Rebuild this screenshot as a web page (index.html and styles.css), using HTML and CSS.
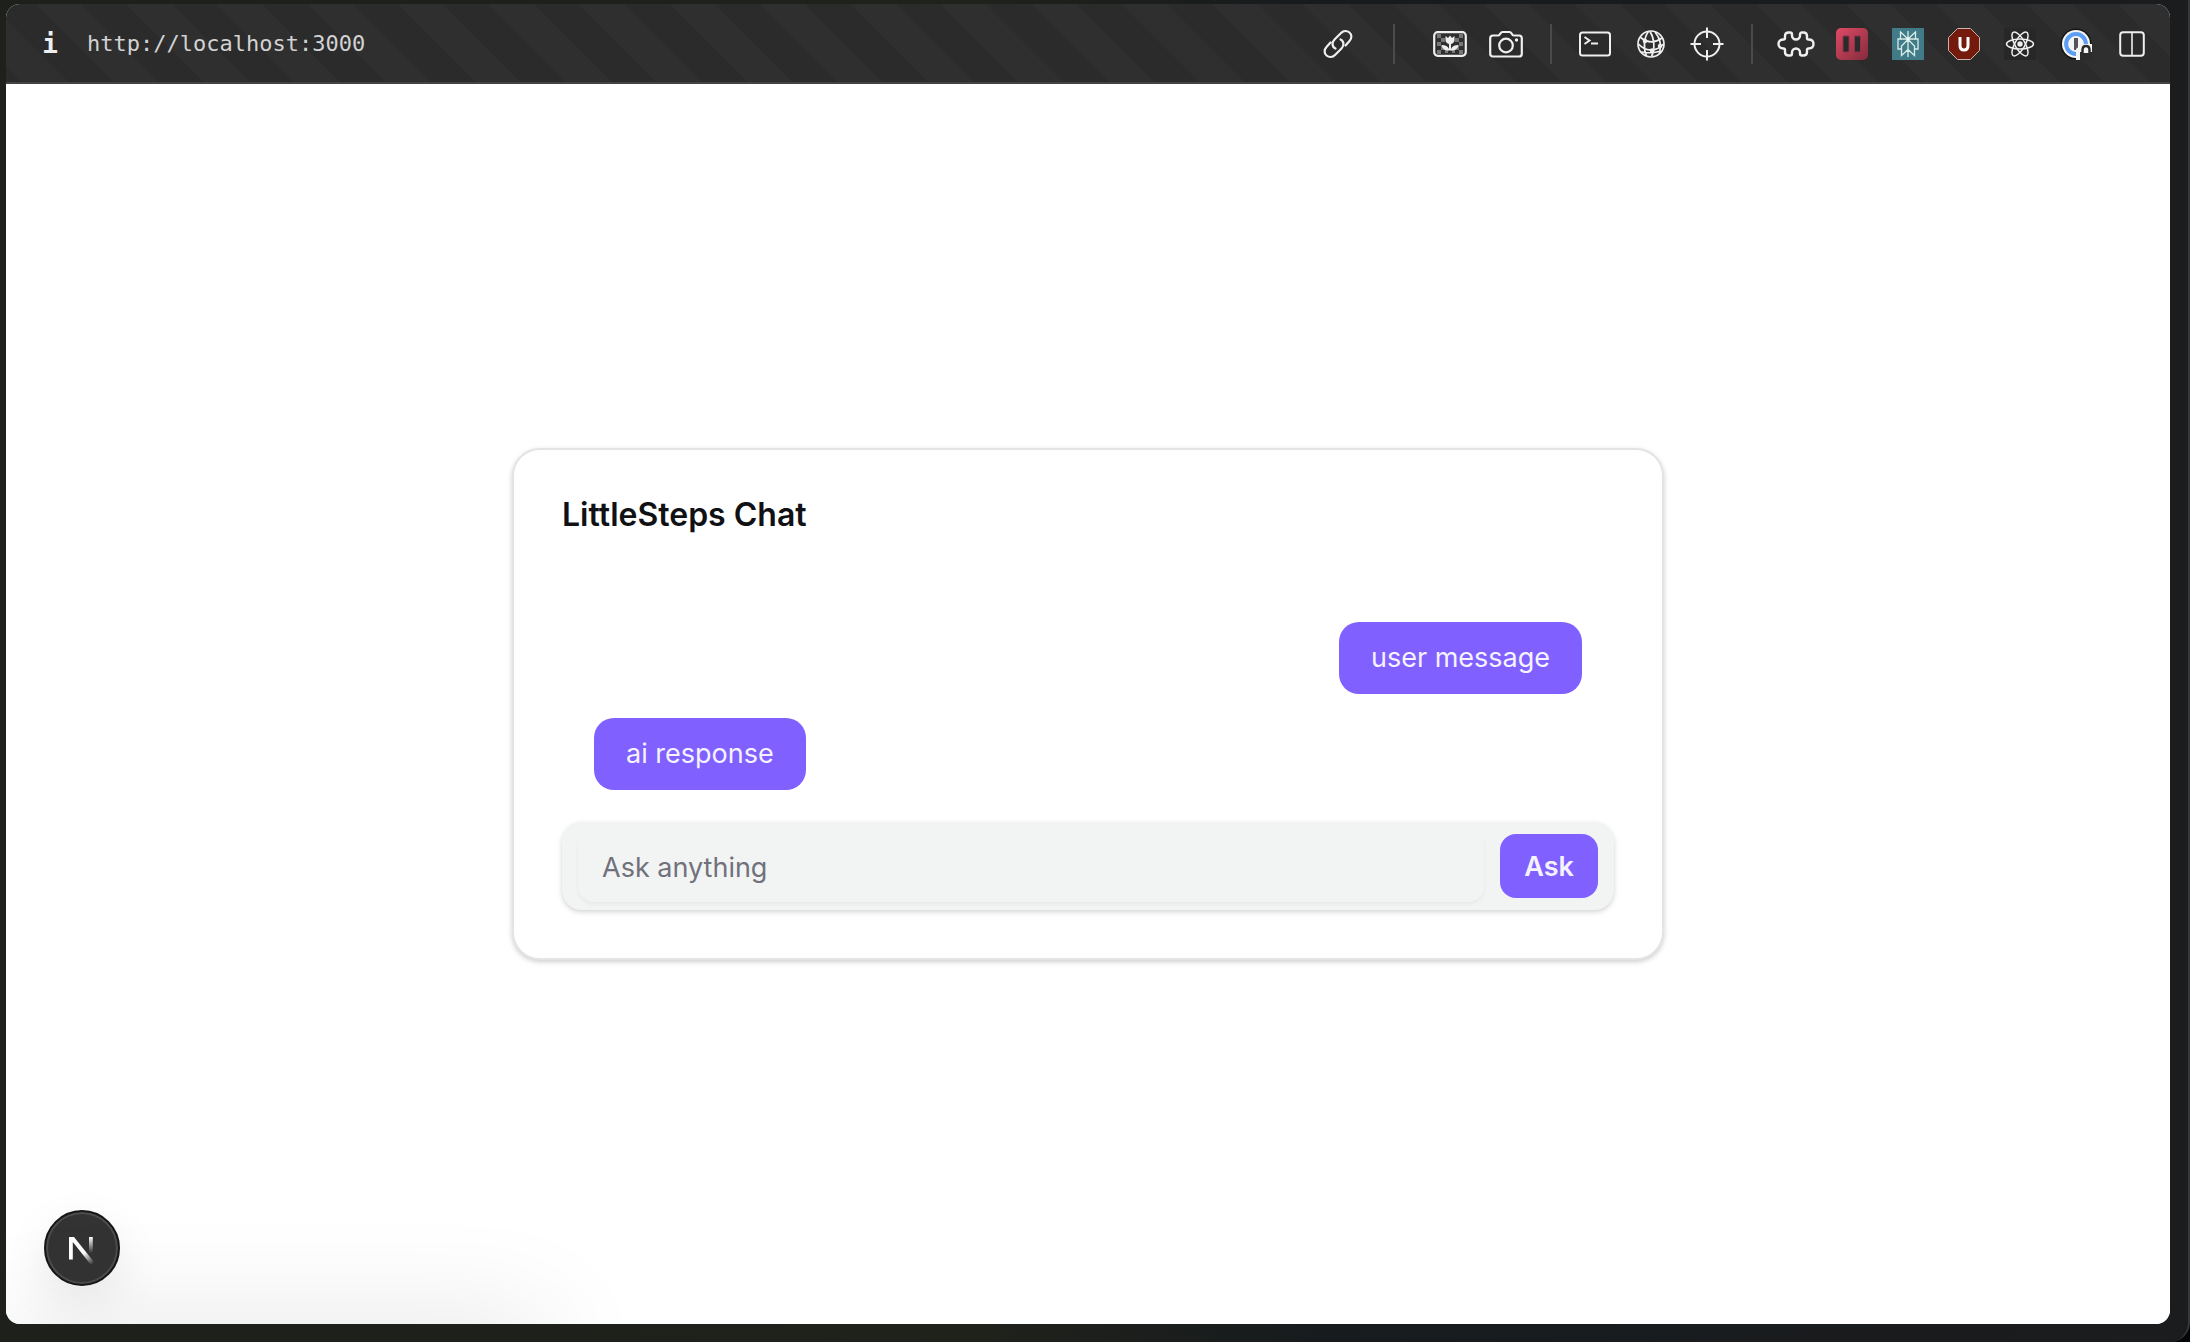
FILE: index.html
```html
<!DOCTYPE html>
<html lang="en">
<head>
<meta charset="utf-8">
<meta name="viewport" content="width=device-width, initial-scale=1">
<title>LittleSteps Chat</title>
<link rel="stylesheet" href="styles.css">
</head>
<body>
<div class="window">
  <header class="toolbar">
    <button class="info" type="button" aria-label="Site information">i</button>
    <a class="address" href="http://localhost:3000">http://localhost:3000</a>
    <div class="tools">
      <button class="tool" type="button" aria-label="Copy link">
        <svg width="30" height="30" viewBox="0 0 30 30" fill="none" stroke="currentColor" stroke-width="2.2" stroke-linecap="round"><path d="M12.500 19.500c-3.500-1.500-4-6-1-9L18 4c2.500-2.500 6-2.500 8.500-.5s2.500 6 0 8.500l-4 4.500"/><path d="M17.500 10.500c3.500 1.500 4 6 1 9L12 26c-2.500 2.500-6 2.500-8.500.5s-2.500-6 0-8.500l4-4.500"/></svg>
      </button>
      <span class="divider divider-wide"></span>
      <button class="tool" type="button" aria-label="Capture element">
        <svg width="34" height="26" viewBox="0 0 34 26"><g fill="#777"><path d="M4 3h4v4H4zM8 7h4v4H8zM4 11h4v4H4zM8 15h4v4H8zM4 19h4v4H4zM26 3h4v4h-4zM22 7h4v4h-4zM26 11h4v4h-4zM22 15h4v4h-4zM26 19h4v4h-4zM12 19h3v3h-3zM19 19h3v3h-3z"/></g><rect x="1.200" y="1.200" width="31.600" height="23.600" rx="3.500" fill="none" stroke="currentColor" stroke-width="2.200"/><path fill="currentColor" d="M12.500 5l2.500 2 2-2.500L19 7l2.500-2v4c0 2-1.500 3.500-3.500 4v5c1-2.500 3.500-4 7.500-4-.5 3.500-3 5.500-7 5.500h-3c-4 0-6.500-2-7-5.500 4 0 6.500 1.500 7.500 4v-5c-2-.5-3.500-2-3.500-4z"/></svg>
      </button>
      <button class="tool" type="button" aria-label="Take screenshot">
        <svg width="34" height="28" viewBox="0 0 34 28" fill="none" stroke="currentColor" stroke-width="2.200"><path d="M4 5.500h5.500c1.500 0 2-3.500 4-3.500h7c2 0 2.500 3.500 4 3.500H30q2.800 0 2.800 2.800v15.400q0 2.800-2.800 2.800H4q-2.800 0-2.800-2.800V8.300Q1.200 5.500 4 5.500z"/><circle cx="17" cy="15.500" r="6.800"/><circle cx="27.500" cy="10" r="1.700" fill="currentColor" stroke="none"/></svg>
      </button>
      <span class="divider"></span>
      <button class="tool" type="button" aria-label="Open console">
        <svg width="32" height="26" viewBox="0 0 32 26" fill="none" stroke="currentColor" stroke-width="2"><rect x="1" y="1.500" width="30" height="23" rx="2.500"/><path d="M5.500 6l5 3.500-5 3.500M12 12.500h7"/></svg>
      </button>
      <button class="tool" type="button" aria-label="Network">
        <svg width="30" height="30" viewBox="0 0 30 30" fill="none" stroke="currentColor" stroke-width="1.700"><circle cx="15" cy="15" r="13"/><path d="M12.500 2.500C8 8 7 19 10.500 27M14 2.500c4 6 5.500 17 1.500 25M19 3c5 6 6.500 14 4.500 21M4 8c7 6 15 6 22 1M2.500 15c7 8 18 8 25 0M5 23c6 1 14 1 20-1"/><g fill="currentColor" stroke="none"><circle cx="9" cy="12" r="2.300"/><circle cx="24" cy="17" r="2.200"/><circle cx="16" cy="21.500" r="2.300"/></g></svg>
      </button>
      <button class="tool" type="button" aria-label="Inspect element">
        <svg width="34" height="34" viewBox="0 0 34 34" fill="none" stroke="currentColor" stroke-width="2"><circle cx="17" cy="17" r="12.500"/><path d="M17 .5v10.500M17 23v10.500M.5 17H11M23 17h10.500"/></svg>
      </button>
      <span class="divider"></span>
      <button class="tool" type="button" aria-label="Extensions">
        <svg width="38" height="26" viewBox="0 0 38 26" fill="none" stroke="currentColor" stroke-width="2.400" stroke-linejoin="round"><path d="M1.500 13c0-3 2-4.500 5-4.500Q8 8.500 8 7V5q0-3.500 3.500-3.500H13q2 0 2 2v1a4 4 0 0 0 8 0v-1q0-2 2-2h1.500Q30 1.500 30 5v2q0 1.500 1.500 1.500c3 0 5 1.500 5 4.500s-2 4.500-5 4.500Q30 17.500 30 19v2q0 3.500-3.500 3.500H25q-2 0-2-2v-1a4 4 0 0 0-8 0v1q0 2-2 2h-1.500Q8 24.500 8 21v-2q0-1.500-1.500-1.500c-3 0-5-1.500-5-4.500z"/></svg>
      </button>
      <button class="tool" type="button" aria-label="Pause extension">
        <svg width="32" height="32" viewBox="0 0 32 32"><defs><linearGradient id="pause" x1="0" y1="0" x2="1" y2="1"><stop offset="0" stop-color="#e04a66"/><stop offset="1" stop-color="#842b3c"/></linearGradient></defs><rect width="32" height="32" rx="5" fill="url(#pause)"/><path fill="#2b2b2b" stroke="#94304a" d="M7 8h6v16H7zM18.500 8h6v16h-6z"/></svg>
      </button>
      <button class="tool" type="button" aria-label="Perplexity">
        <svg width="32" height="32" viewBox="0 0 32 32" fill="none" stroke="#d7ece9" stroke-width="1.300"><path fill="#427b88" stroke="none" d="M0 0h32v32H0z"/><path d="M16 3v26M16 11L8.500 4v7M16 11l7.500-7v7M9 21H6V11h20v10h-3M16 11.500L9.500 18v9.500L16 21.500M16 11.500l6.500 6.500v9.500L16 21.500"/><circle cx="16" cy="11" r="1.500" fill="#fff"/></svg>
      </button>
      <button class="tool" type="button" aria-label="uBlock Origin">
        <svg width="32" height="32" viewBox="0 0 32 32"><path d="M9.500.5h13l9 9v13l-9 9h-13l-9-9v-13z" fill="#751b0d" stroke="#c9b3ae"/><path d="M12 9v8.500q0 4.500 4 4.500t4-4.500V9" fill="none" stroke="#fff" stroke-width="3"/></svg>
      </button>
      <button class="tool" type="button" aria-label="React Developer Tools">
        <svg width="32" height="32" viewBox="0 0 32 32" fill="none" stroke="currentColor" stroke-width="1.500"><path d="M0 0h32v32H0z" fill="#272727" stroke="none"/><ellipse cx="16" cy="16" rx="13.500" ry="5"/><ellipse cx="16" cy="16" rx="13.500" ry="5" transform="rotate(60 16 16)"/><ellipse cx="16" cy="16" rx="13.500" ry="5" transform="rotate(120 16 16)"/><circle cx="16" cy="16" r="2.700" fill="currentColor" stroke="none"/></svg>
      </button>
      <button class="tool" type="button" aria-label="1Password">
        <svg width="32" height="32" viewBox="0 0 32 32"><circle cx="16" cy="16" r="15.500" fill="#151515"/><circle cx="16" cy="16" r="14" fill="#f5f5f5"/><circle cx="16" cy="16" r="9.900" fill="none" stroke="#5c9df5" stroke-width="4"/><path d="M14 10h4v12h-4z" fill="#555"/><path d="M16 21l6-5h10v16H16z" fill="#f5f5f5"/><path d="M20 24h12v8H20z" fill="#2b2b2b"/><path d="M22.500 25v-3q0-4 3.500-4t3.500 4v3" fill="#f5f5f5" stroke="#2b2b2b" stroke-width="2.500"/></svg>
      </button>
      <button class="tool" type="button" aria-label="Split view">
        <svg width="26" height="26" viewBox="0 0 26 26" fill="none" stroke="currentColor" stroke-width="2"><rect x="1.200" y="1.200" width="23.600" height="23.600" rx="3"/><path d="M13 1v24" stroke-width="1.600"/></svg>
      </button>
    </div>
  </header>

  <main class="page">
    <section class="card">
      <h1 class="card-title">LittleSteps Chat</h1>
      <div class="messages">
        <p class="bubble bubble-user">user message</p>
        <p class="bubble bubble-ai">ai response</p>
      </div>
      <form class="composer">
        <input class="composer-input" type="text" placeholder="Ask anything" aria-label="Ask anything">
        <button class="composer-send" type="button">Ask</button>
      </form>
    </section>
    <button class="dev-badge" type="button" aria-label="Next.js dev tools">
      <svg width="28" height="24" viewBox="0 0 28 24" overflow="visible" fill="none"><defs><linearGradient id="nd" gradientUnits="userSpaceOnUse" x1="16" y1="17" x2="25" y2="28"><stop stop-color="#fff"/><stop offset="1" stop-color="#fff" stop-opacity="0"/></linearGradient><linearGradient id="nv" gradientUnits="userSpaceOnUse" x1="23" y1="1" x2="23" y2="17"><stop stop-color="#fff"/><stop offset="1" stop-color="#fff" stop-opacity="0"/></linearGradient></defs><path d="M1 1h5l20 25-3 3L4.800 6v17.500H1z" fill="url(#nd)"/><path d="M21 1h3.800v16H21z" fill="url(#nv)"/></svg>
    </button>
  </main>
</div>
</body>
</html>
```
FILE: styles.css
```css
* {
  box-sizing: border-box;
}

html {
  background: #050608;
}

body {
  display: flex;
  min-height: 100vh;
  margin: 0;
  padding: 4px 18px 18px 6px;
  border-right: 2px solid #36393b;
  border-radius: 0 0 20px 0;
  background: linear-gradient(to right, #1d201b, #1f211b 45%, #171b1d 60%, #1b1c1e);
  font-family: Inter, "Liberation Sans", sans-serif;
}

button {
  margin: 0;
  padding: 0;
  border: 0;
  background: none;
  color: inherit;
  font: inherit;
}

.window {
  display: flex;
  flex: 1;
  flex-direction: column;
  overflow: hidden;
  border-radius: 14px;
  background: #fff;
}

.toolbar {
  display: flex;
  align-items: center;
  height: 80px;
  padding: 2px 10px 0 36px;
  border-bottom: 2px solid #434343;
  background: repeating-linear-gradient(45deg, #2b2b2b 0 12px, #2f2f2f 12px 44px, #2b2b2b 44px 64px);
  color: #efefef;
}

.info {
  width: 16px;
  font: bold 26px/40px "DejaVu Sans Mono", monospace;
}

.address {
  margin-left: 29px;
  color: #d2d2d2;
  font: 22px/40px "DejaVu Sans Mono", monospace;
  text-decoration: none;
}

.tools {
  display: flex;
  align-items: center;
  margin-left: auto;
}

.tool {
  display: flex;
  align-items: center;
  justify-content: center;
  width: 56px;
  height: 40px;
}

.divider {
  width: 2px;
  height: 40px;
  margin: 0 15px 0 16px;
  background: #4b4b4b;
}

.divider-wide {
  margin: 0 27px;
}

.page {
  position: relative;
  display: flex;
  flex: 1;
  align-items: center;
  justify-content: center;
  overflow: hidden;
  background: #fff;
}

/* soft shade rising from the lower left edge */
.page::after {
  content: "";
  position: absolute;
  top: 100%;
  left: 0;
  width: 540px;
  height: 60px;
  box-shadow: 0 0 110px rgba(0, 0, 0, 0.13);
  pointer-events: none;
}

.card {
  width: 100%;
  max-width: 1152px;
  padding: 48px;
  border: 2px solid #e4e4e4;
  border-radius: 28px;
  background: #fff;
  box-shadow: 0 2px 6px rgba(0, 0, 0, 0.1), 0 2px 4px rgba(0, 0, 0, 0.1);
}

.card-title {
  margin: 0;
  color: #101114;
  font-size: 32px;
  font-weight: 600;
  line-height: 34px;
}

.messages {
  display: flex;
  flex-direction: column;
  gap: 24px;
  padding: 90px 32px 32px;
}

.bubble {
  margin: 0;
  padding: 16px 32px;
  border-radius: 20px;
  background: #8060ff;
  color: #f5f3ff;
  font-size: 27px;
  line-height: 40px;
}

.bubble-user {
  align-self: flex-end;
}

.bubble-ai {
  align-self: flex-start;
}

.composer {
  display: flex;
  align-items: center;
  gap: 16px;
  padding: 8px 16px;
  border-radius: 20px;
  background: #f2f4f4;
  box-shadow: 0 2px 6px rgba(0, 0, 0, 0.1), 0 2px 4px rgba(0, 0, 0, 0.08);
}

.composer-input {
  flex: 1;
  min-width: 0;
  height: 72px;
  padding: 2px 24px 0;
  border: 0;
  border-radius: 16px;
  background: #f2f4f4;
  box-shadow: 0 2px 4px rgba(0, 0, 0, 0.05);
  color: #18181b;
  font: 27px/40px Inter, "Liberation Sans", sans-serif;
}

.composer-input::placeholder {
  color: #71717b;
}

.composer-send {
  height: 64px;
  padding: 0 24px;
  border-radius: 16px;
  background: #8060ff;
  color: #f5f3ff;
  font-size: 27px;
  font-weight: 600;
}

.dev-badge {
  position: absolute;
  bottom: 38px;
  left: 38px;
  display: flex;
  align-items: center;
  justify-content: center;
  width: 76px;
  height: 76px;
  border: 2px solid #171717;
  border-radius: 50%;
  background: #333;
  box-shadow: inset 0 0 0 2px #4d4d4d, 0 16px 48px rgba(0, 0, 0, 0.08);
}
```
